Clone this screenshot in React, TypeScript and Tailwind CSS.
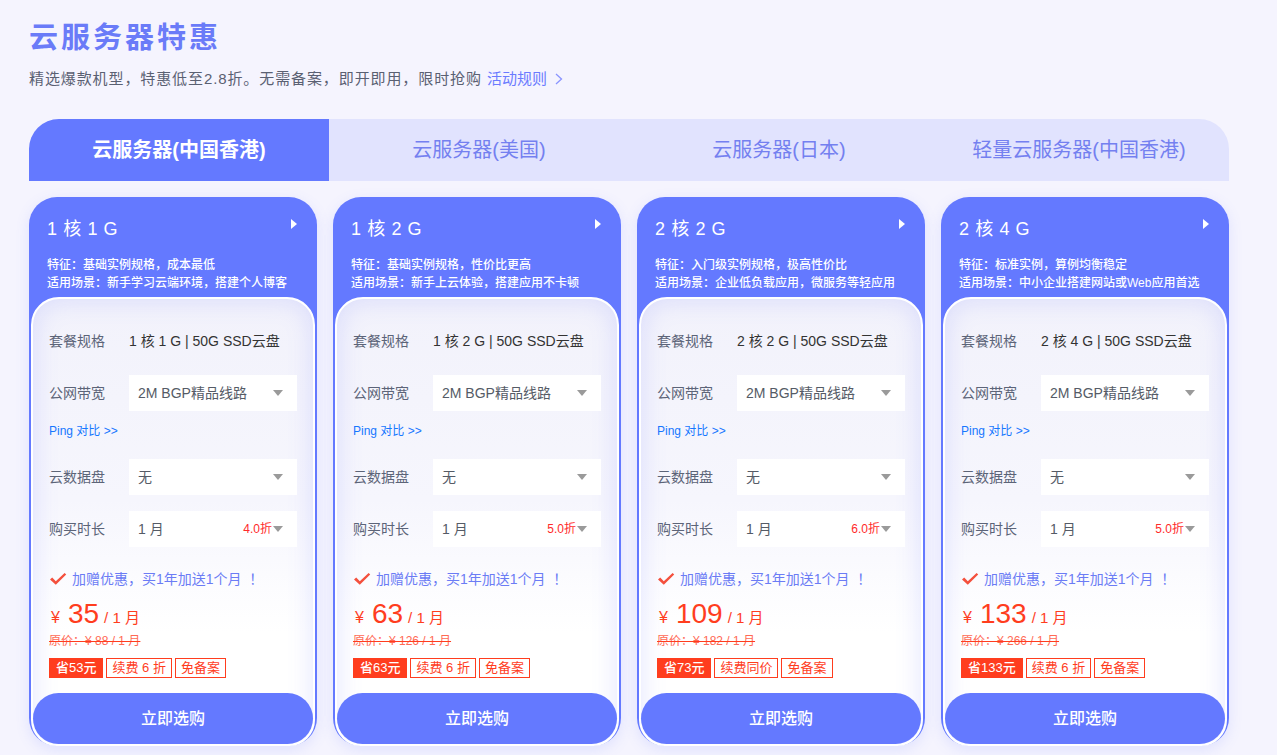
import React from "react";

const plans = [
  {
    title: "1 核 1 G",
    feature: "特征：基础实例规格，成本最低",
    scene: "适用场景：新手学习云端环境，搭建个人博客",
    spec: "1 核 1 G | 50G SSD云盘",
    discount: "4.0折",
    price: "35",
    origin: "原价：¥ 88 / 1 月",
    save: "省53元",
    renew: "续费 6 折",
  },
  {
    title: "1 核 2 G",
    feature: "特征：基础实例规格，性价比更高",
    scene: "适用场景：新手上云体验，搭建应用不卡顿",
    spec: "1 核 2 G | 50G SSD云盘",
    discount: "5.0折",
    price: "63",
    origin: "原价：¥ 126 / 1 月",
    save: "省63元",
    renew: "续费 6 折",
  },
  {
    title: "2 核 2 G",
    feature: "特征：入门级实例规格，极高性价比",
    scene: "适用场景：企业低负载应用，微服务等轻应用",
    spec: "2 核 2 G | 50G SSD云盘",
    discount: "6.0折",
    price: "109",
    origin: "原价：¥ 182 / 1 月",
    save: "省73元",
    renew: "续费同价",
  },
  {
    title: "2 核 4 G",
    feature: "特征：标准实例，算例均衡稳定",
    scene: "适用场景：中小企业搭建网站或Web应用首选",
    spec: "2 核 4 G | 50G SSD云盘",
    discount: "5.0折",
    price: "133",
    origin: "原价：¥ 266 / 1 月",
    save: "省133元",
    renew: "续费 6 折",
  },
];

const tabs = ["云服务器(中国香港)", "云服务器(美国)", "云服务器(日本)", "轻量云服务器(中国香港)"];

const Caret = () => (
  <svg width="10" height="6" viewBox="0 0 10 6" className="shrink-0">
    <path d="M0 0 L10 0 L5 6 Z" fill="#9a9a9a" />
  </svg>
);

const Select = ({ value, extra }: { value: string; extra?: string }) => (
  <div className="w-[168px] h-[36px] bg-white flex items-center pl-[9px] pr-[14px] text-[14px] text-[#555b66]">
    <span className="flex-1 whitespace-nowrap">{value}</span>
    {extra && <span className="text-[12px] text-[#ff2a2a] mr-[1px]">{extra}</span>}
    <Caret />
  </div>
);

const Card = ({ p }: { p: (typeof plans)[number] }) => (
  <div className="w-[288px] h-[549px] rounded-[28px] bg-[#6479ff] flex flex-col shadow-[0_4px_14px_rgba(100,121,255,0.15)]">
    <div className="h-[100px] pl-[18px] pr-[20px] pt-[19px] text-white">
      <div className="flex items-start justify-between">
        <div className="text-[18px] leading-[26px] tracking-[0.6px]">{p.title}</div>
        <svg width="6" height="10" viewBox="0 0 6 10" className="mt-[3px]">
          <path d="M0 0 L6 5 L0 10 Z" fill="#ffffff" />
        </svg>
      </div>
      <div className="mt-[14px] text-[12px] leading-[18px] font-medium whitespace-nowrap">
        <div>{p.feature}</div>
        <div>{p.scene}</div>
      </div>
    </div>
    <div className="flex-1 mx-[2px] rounded-t-[28px] rounded-b-[26px] bg-[linear-gradient(180deg,#f2f2fb_0%,#f6f6fd_45%,#ffffff_75%)] border-2 border-white shadow-[inset_0_0_26px_rgba(110,118,255,0.2)] flex flex-col">
      <div className="px-[16px] pt-[24px]">
        <div className="flex items-center h-[36px] text-[14px]">
          <span className="w-[80px] text-[#5c6478]">套餐规格</span>
          <span className="text-[#333]">{p.spec}</span>
        </div>
        <div className="flex items-center mt-[16px] text-[14px]">
          <span className="w-[80px] text-[#5c6478]">公网带宽</span>
          <Select value="2M BGP精品线路" />
        </div>
        <div className="mt-[10px] h-[20px] leading-[20px] text-[12px] text-[#1677ff]">Ping 对比 &gt;&gt;</div>
        <div className="flex items-center mt-[18px] text-[14px]">
          <span className="w-[80px] text-[#5c6478]">云数据盘</span>
          <Select value="无" />
        </div>
        <div className="flex items-center mt-[16px] text-[14px]">
          <span className="w-[80px] text-[#5c6478]">购买时长</span>
          <Select value="1 月" extra={p.discount} />
        </div>
        <div className="mt-[22px] h-[20px] flex items-center text-[14px] text-[#6b7cf5]">
          <svg width="18" height="14" viewBox="0 0 18 14" className="mr-[5px]">
            <path d="M1 7.5 L3.2 5.6 L6.8 9.2 L15.6 1 L17.2 2.6 L6.8 12.8 Z" fill="#f4503d" />
          </svg>
          加赠优惠，买1年加送1个月 &nbsp;！
        </div>
        <div className="mt-[8px] h-[34px] flex items-baseline text-[#ff3d1e]">
          <span className="text-[16px] mr-[8px] ml-[2px]">¥</span>
          <span className="text-[28px] leading-[34px]">{p.price}</span>
          <span className="text-[15px] ml-[5px]">/ 1 月</span>
        </div>
        <div className="mt-[3px] h-[14px] leading-[14px] text-[12px] text-[#ff6a55] line-through decoration-[#ff3d1e]">{p.origin}</div>
        <div className="mt-[10px] flex gap-[3px] text-[13px] leading-[18px]">
          <span className="bg-[#ff3d1e] text-white px-[7px] h-[20px] leading-[20px] font-medium">{p.save}</span>
          <span className="border border-[#ff3d1e] text-[#ff3d1e] px-[5px] h-[20px]">{p.renew}</span>
          <span className="border border-[#ff3d1e] text-[#ff3d1e] px-[5px] h-[20px]">免备案</span>
        </div>
      </div>
      <button className="mt-auto h-[51px] w-full rounded-[26px] bg-[#6479ff] text-white text-[16px] font-medium">立即选购</button>
    </div>
  </div>
);

export default function App() {
  return (
    <div
      className="bg-[#f5f4fe] w-[1277px] h-[755px] overflow-hidden"
      style={{ fontFamily: "'Liberation Sans', 'Noto Sans CJK SC', sans-serif" }}
    >
      <div className="pl-[29px] pt-[20px]">
        <h1 className="text-[29px] leading-[36px] font-bold tracking-[3px] text-[#6a7bf8]">云服务器特惠</h1>
        <p className="mt-[12px] text-[15px] leading-[22px] text-[#5a6072] tracking-[0.9px]">
          精选爆款机型，特惠低至2.8折。无需备案，即开即用，限时抢购{" "}
          <span className="text-[#6b7bff] tracking-normal">活动规则</span>
          <svg width="8" height="12" viewBox="0 0 8 12" className="inline-block ml-[8px] -mt-[2px]">
            <path d="M1 1 L6.5 6 L1 11" stroke="#8a94ff" strokeWidth="1.3" fill="none" />
          </svg>
        </p>
        <div className="mt-[29px] w-[1200px] h-[62px] flex">
          {tabs.map((t, i) => (
            <div
              key={t}
              className={
                i === 0
                  ? "w-[300px] flex items-center justify-center bg-[#6479ff] text-white font-bold text-[20px] rounded-tl-[30px]"
                  : i === 3
                  ? "w-[300px] flex items-center justify-center bg-[#e1e3fe] text-[#7480f0] text-[20px] rounded-tr-[30px]"
                  : "w-[300px] flex items-center justify-center bg-[#e1e3fe] text-[#7480f0] text-[20px]"
              }
            >
              {t}
            </div>
          ))}
        </div>
        <div className="mt-[16px] flex gap-[16px]">
          {plans.map((p) => (
            <Card key={p.title} p={p} />
          ))}
        </div>
      </div>
    </div>
  );
}
